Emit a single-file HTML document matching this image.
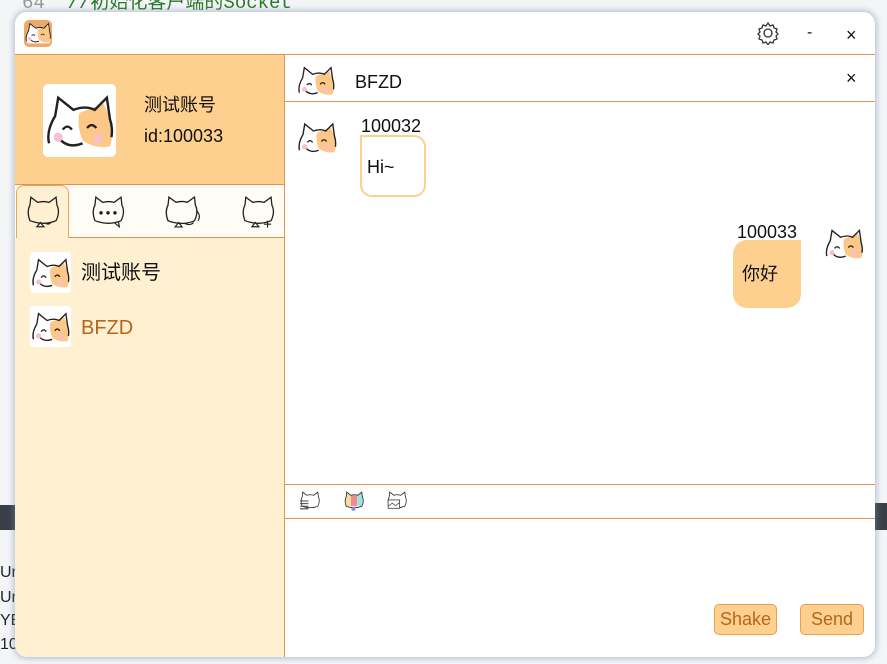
<!DOCTYPE html>
<html><head><meta charset="utf-8"><style>
*{margin:0;padding:0;box-sizing:border-box}
body{width:887px;height:664px;overflow:hidden;background:#f4f5f7;font-family:"Liberation Sans","Noto Sans CJK SC",sans-serif;position:relative;color:#111}
.abs{position:absolute}
.win{position:absolute;left:15px;top:12px;width:860px;height:645px;border-radius:12px;background:#fff;overflow:hidden;box-shadow:0 0 6px 2px rgba(120,140,170,.45)}
.t{position:absolute;white-space:nowrap;line-height:1}
</style></head><body>
<svg width="0" height="0" style="position:absolute"><defs>
<g id="cat">
<path d="M6 38 Q2 26 8 16 L10 4 L20 12 Q28 9 34 12 L42 4 L44 18 Q48 28 44 38 Z" fill="#fff"/>
<path d="M24 14 Q34 10 40 8 L44 18 Q47 28 44 36 Q34 38 26 32 Q22 22 24 14Z" fill="#fdc887"/>
<path d="M4 34 Q2 26 8 16 L10 4 L20 12 Q28 9 34 12 L42 4 L44 18 Q46 24 45 30" fill="none" stroke="#222" stroke-width="1.6"/>
<path d="M10 30 Q16 38 26 34" fill="none" stroke="#222" stroke-width="1.6"/>
<path d="M13 25 Q16 21 19 25 M29 24 Q32 20 35 24" fill="none" stroke="#222" stroke-width="1.5"/>
<circle cx="10" cy="30" r="3" fill="#f6c0cc"/><circle cx="36" cy="31" r="3" fill="#f6c0cc"/>
</g>
<g id="outline"><path d="M8 30 Q4 20 8 12 L9 3 L17 9 Q24 7 30 9 L38 3 L39 12 Q43 20 38 30 Q24 36 8 30Z" fill="none" stroke="#222" stroke-width="1.5"/></g>
</defs></svg>

<div class="t" style="left:22px;top:-6px;font-size:19px;color:#2a7a2a;font-family:'Liberation Mono',monospace"><span style="color:#999">64</span>&nbsp;&nbsp;//初始化客户端的Socket</div>
<div class="abs" style="left:0;top:505px;width:15px;height:25px;background:#3a3f47"></div>
<div class="abs" style="left:875px;top:503px;width:12px;height:27px;background:#3a3f47"></div>
<div class="t" style="left:0;top:565px;font-size:16px;color:#223">Ur</div>
<div class="t" style="left:0;top:590px;font-size:16px;color:#223">Ur</div>
<div class="t" style="left:0;top:613px;font-size:16px;color:#223">YE</div>
<div class="t" style="left:0;top:637px;font-size:16px;color:#223">10</div>

<div class="win">
 <div class="abs" style="left:9px;top:8px;width:28px;height:27px;border-radius:5px;background:#f0a868"><svg width="28" height="27" viewBox="0 0 48 42"><use href="#cat"/></svg></div>
 <svg class="abs" style="left:741px;top:9px" width="24" height="24" viewBox="0 0 24 24"><path d="M12 2l2 3 3-1 1 3 3 1-1 3 2 2-2 2 1 3-3 1-1 3-3-1-2 3-2-3-3 1-1-3-3-1 1-3-2-2 2-2-1-3 3-1 1-3 3 1z" fill="none" stroke="#333" stroke-width="1.3"/><circle cx="12" cy="12" r="4" fill="none" stroke="#333" stroke-width="1.3"/></svg>
 <div class="t" style="left:792px;top:13px;font-size:16px">-</div>
 <div class="t" style="left:831px;top:14px;font-size:18px">×</div>
 <div class="abs" style="left:0;top:42px;width:860px;height:1px;background:#e2944f"></div>

 <div class="abs" style="left:0;top:43px;width:270px;height:130px;background:#fdd08f"></div>
 <div class="abs" style="left:28px;top:72px;width:73px;height:73px;background:#fff;border-radius:5px;overflow:hidden"><svg width="73" height="73" viewBox="0 -4 48 46"><use href="#cat"/></svg></div>
 <div class="t" style="left:129px;top:84px;font-size:18px">测试账号</div>
 <div class="t" style="left:129px;top:115px;font-size:18px">id:100033</div>
 <div class="abs" style="left:0;top:172px;width:270px;height:1px;background:#e2944f"></div>
 <div class="abs" style="left:0;top:173px;width:270px;height:52px;background:#fffcf5"></div>
 <div class="abs" style="left:1px;top:173px;width:53px;height:53px;background:#fff0d2;border:1px solid #e8a55e;border-bottom:none;border-radius:8px 8px 0 0"></div>
 <div class="abs" style="left:54px;top:225px;width:216px;height:1px;background:#e2944f"></div>
 <svg class="abs" style="left:8px;top:180px" width="40" height="40" viewBox="0 0 46 40"><use href="#outline"/><path d="M20 32 l-4 5 h8z M26 33 q4 2 6-1" fill="none" stroke="#222" stroke-width="1.4"/></svg>
 <svg class="abs" style="left:73px;top:182px" width="40" height="36" viewBox="0 0 46 40"><use href="#outline"/><circle cx="15" cy="21" r="2" fill="#222"/><circle cx="23" cy="21" r="2" fill="#222"/><circle cx="31" cy="21" r="2" fill="#222"/><path d="M30 32 l6 5 -1-6" fill="none" stroke="#222" stroke-width="1.4"/></svg>
 <svg class="abs" style="left:146px;top:180px" width="44" height="40" viewBox="0 0 50 40"><use href="#outline"/><path d="M20 32 l-4 5 h8z M27 33 q6 3 10-1 M40 18 q6 6 2 12" fill="none" stroke="#222" stroke-width="1.3"/></svg>
 <svg class="abs" style="left:223px;top:180px" width="40" height="40" viewBox="0 0 46 40"><use href="#outline"/><path d="M20 32 l-4 5 h8z M34 30 v8 M30 34 h8" fill="none" stroke="#222" stroke-width="1.4"/></svg>
 <div class="abs" style="left:0;top:226px;width:270px;height:419px;background:#fff0d2"></div>
 <div class="abs" style="left:15px;top:240px;width:41px;height:41px;background:#fff;border-radius:3px"><svg width="41" height="41" viewBox="0 -4 48 46"><use href="#cat"/></svg></div>
 <div class="t" style="left:66px;top:251px;font-size:20px">测试账号</div>
 <div class="abs" style="left:15px;top:294px;width:41px;height:41px;background:#fff;border-radius:3px"><svg width="41" height="41" viewBox="0 -4 48 46"><use href="#cat"/></svg></div>
 <div class="t" style="left:66px;top:306px;font-size:20px;color:#b5651d">BFZD</div>
 <div class="abs" style="left:269px;top:43px;width:1px;height:602px;background:#e2944f"></div>

 <svg class="abs" style="left:281px;top:50px" width="40" height="38" viewBox="0 -2 48 44"><use href="#cat"/></svg>
 <div class="t" style="left:340px;top:61px;font-size:18px">BFZD</div>
 <div class="t" style="left:831px;top:57px;font-size:18px">×</div>
 <div class="abs" style="left:270px;top:89px;width:590px;height:1px;background:#e2944f"></div>

 <svg class="abs" style="left:281px;top:106px" width="42" height="40" viewBox="0 -2 48 44"><use href="#cat"/></svg>
 <div class="t" style="left:346px;top:105px;font-size:18px">100032</div>
 <div class="abs" style="left:345px;top:123px;width:66px;height:62px;border:2px solid #fdd08f;border-radius:0 12px 12px 12px"></div>
 <div class="t" style="left:352px;top:146px;font-size:18px">Hi~</div>
 <div class="t" style="left:722px;top:211px;font-size:18px">100033</div>
 <div class="abs" style="left:718px;top:228px;width:68px;height:68px;background:#fdd08f;border-radius:14px 0 14px 14px"></div>
 <div class="t" style="left:727px;top:253px;font-size:18px">你好</div>
 <svg class="abs" style="left:807px;top:215px" width="44" height="36" viewBox="0 0 48 42"><use href="#cat"/></svg>

 <div class="abs" style="left:270px;top:472px;width:590px;height:1px;background:#e2944f"></div>
 <svg class="abs" style="left:283px;top:477px" width="24" height="24" viewBox="0 0 46 40"><use href="#outline"/><path d="M4 20h16M4 25h16M4 30h16M4 35h16" stroke="#444" stroke-width="2"/></svg>
 <svg class="abs" style="left:327px;top:477px" width="24" height="24" viewBox="0 0 46 40"><path d="M9 4 L17 9 V30 H9 Q4 20 9 4Z" fill="#f0e1a0"/><path d="M17 9 H29 V30 H17Z" fill="#f48a8a"/><path d="M29 9 L38 4 Q43 20 37 30 H29Z" fill="#9ee3e6"/><use href="#outline"/><circle cx="22" cy="35" r="4" fill="#8888dd"/></svg>
 <svg class="abs" style="left:370px;top:477px" width="24" height="24" viewBox="0 0 46 40"><use href="#outline"/><rect x="6" y="18" width="22" height="16" fill="#fff" stroke="#444" stroke-width="1.6"/><path d="M6 30 l8-6 6 5 8-6" fill="none" stroke="#444" stroke-width="1.4"/></svg>
 <div class="abs" style="left:270px;top:506px;width:590px;height:1px;background:#e2944f"></div>

 <div class="abs" style="left:699px;top:592px;width:63px;height:31px;background:#fdd08f;border:1px solid #e8a04f;border-radius:5px;color:#b5651d;font-size:18px;text-align:center;line-height:29px">Shake</div>
 <div class="abs" style="left:785px;top:592px;width:64px;height:31px;background:#fdd08f;border:1px solid #e8a04f;border-radius:5px;color:#b5651d;font-size:18px;text-align:center;line-height:29px">Send</div>
</div>
</body></html>
